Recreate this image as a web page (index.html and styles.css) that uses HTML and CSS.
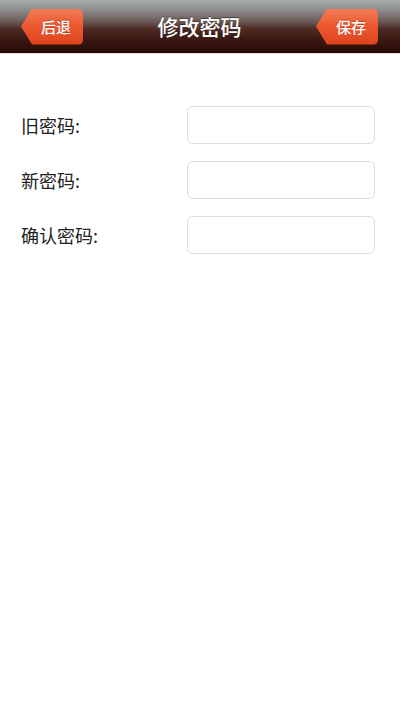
FILE: index.html
```html
<!DOCTYPE html>
<html lang="zh">
<head>
<meta charset="utf-8">
<title>修改密码</title>
<link rel="stylesheet" href="styles.css">
</head>
<body>
<header class="topbar">
  <div class="btn btn-back">后退</div>
  <h1 class="title">修改密码</h1>
  <div class="btn btn-save">保存</div>
</header>
<main class="form">
  <div class="row">
    <label class="label">旧密码:</label>
    <div class="input"></div>
  </div>
  <div class="row">
    <label class="label">新密码:</label>
    <div class="input"></div>
  </div>
  <div class="row">
    <label class="label">确认密码:</label>
    <div class="input"></div>
  </div>
</main>
</body>
</html>
```
FILE: styles.css
```css
* { box-sizing: border-box; }
html, body {
  margin: 0;
  padding: 0;
  background: #ffffff;
  font-family: "Noto Sans CJK SC", "Noto Sans", sans-serif;
}
.topbar {
  height: 54px;
  display: flex;
  align-items: center;
  justify-content: space-between;
  padding: 0 22px 0 21px;
  background: linear-gradient(to bottom, #a6acac 0%, #8d8f8e 18%, #6c5b58 40%, #4d2a24 55%, #3a1812 75%, #2a0d09 96%, #1e0806 100%);
  border-bottom: 1px solid #e4dedc;
}
.title {
  margin: 0;
  font-size: 21px;
  font-weight: 500;
  color: #ffffff;
  text-shadow: 0 -1px 0 rgba(0,0,0,0.4);
  line-height: 1;
}
.btn {
  width: 62px;
  height: 36px;
  display: flex;
  align-items: center;
  justify-content: center;
  padding-left: 8px;
  font-size: 15px;
  font-weight: 500;
  color: #ffffff;
  background: linear-gradient(to bottom, #f47a55 0%, #ec5a32 45%, #dd431c 100%);
  border-radius: 0 5px 5px 0;
  clip-path: polygon(11px 0, 100% 0, 100% 100%, 11px 100%, 0 50%);
  text-shadow: 0 -1px 0 rgba(120,30,0,0.4);
}
.form {
  display: flex;
  flex-direction: column;
  gap: 17px;
  padding: 52px 25px 0 21px;
}
.row {
  display: flex;
  align-items: center;
  justify-content: space-between;
}
.label {
  font-size: 18px;
  color: #222222;
}
.input {
  width: 188px;
  height: 38px;
  border: 1px solid #dcdcdc;
  border-radius: 6px;
  background: #ffffff;
}
```
